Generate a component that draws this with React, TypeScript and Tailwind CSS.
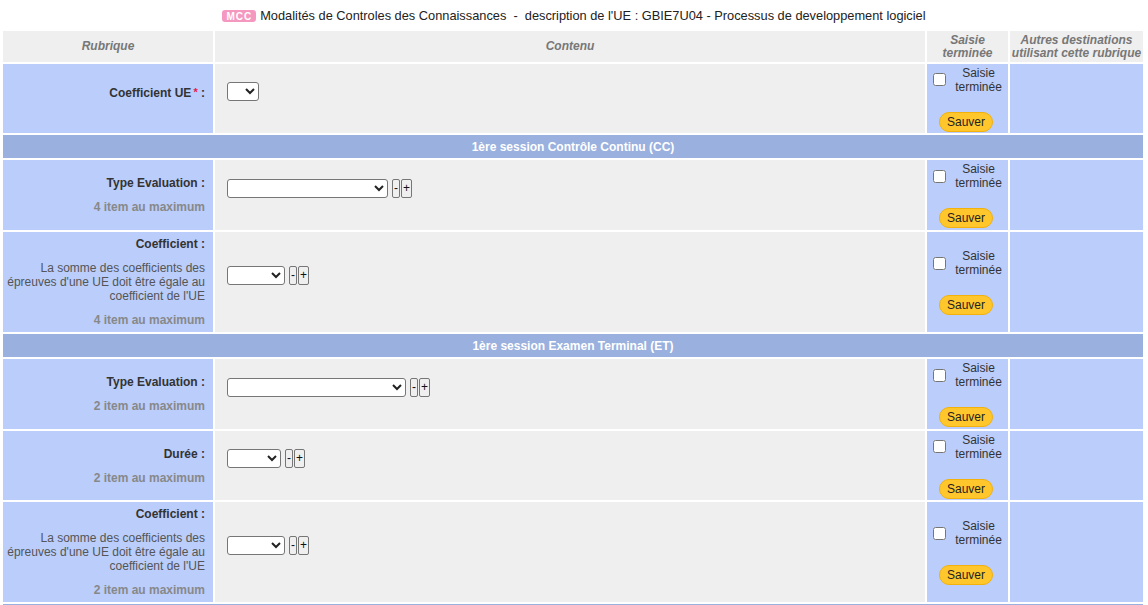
import React from 'react';

interface FieldRow {
  label: string;
  required?: boolean;
  description?: string;
  max?: string;
  selectWidth: number;
  buttons?: boolean;
  height: number;
  shiftLabel?: boolean;
}

const selectWidths: Record<number, string> = {
  32: 'w-[32px]',
  54: 'w-[54px]',
  58: 'w-[58px]',
  161: 'w-[161px]',
  179: 'w-[179px]',
};

const rowHeights: Record<number, string> = {
  69: 'h-[69px]',
  70: 'h-[70px]',
  100: 'h-[100px]',
};

function SaisieCell() {
  return (
    <td className="bg-[#bacdfb] align-middle px-[6px]">
      <div className="flex items-center">
        <input type="checkbox" className="w-[13px] h-[13px] m-0 shrink-0" />
        <span className="flex-1 text-center pl-[9px] leading-[14px] text-[#333]">
          Saisie
          <br />
          terminée
        </span>
      </div>
      <div className="mt-[18px] flex justify-center">
        <button className="h-[20px] px-[7px] rounded-full bg-[#ffc72c] border border-[#f2b10c] text-[#222] leading-[18px] mr-[3px]">
          Sauver
        </button>
      </div>
    </td>
  );
}

function Row({ row }: { row: FieldRow }) {
  return (
    <tr className={rowHeights[row.height]}>
      <td className={`bg-[#bacdfb] text-right pr-[8px] pl-[4px] align-middle ${row.shiftLabel ? 'pb-[12px]' : ''}`}>
        <div className="font-bold text-[#333] leading-[14px]">
          {row.label}
          {row.required && <sup className="text-[#e8174f] text-[11px] ml-[2px] relative -top-[1px]">*</sup>}
          {' :'}
        </div>
        {row.description && (
          <div className="mt-[10px] text-[#555] leading-[14px]">{row.description}</div>
        )}
        {row.max && <div className="mt-[10px] font-bold text-[#888] leading-[14px]">{row.max}</div>}
      </td>
      <td className="bg-[#efefef] pl-[12px] align-middle pb-[14px]">
        <div className="flex items-center">
          <select className={`${selectWidths[row.selectWidth]} h-[19px] border border-[#767676] rounded-[3px] bg-white text-[12px]`}></select>
          {row.buttons && (
            <div className="flex ml-[4px]">
              <button className="w-[8px] h-[19px] border border-[#767676] rounded-[2px] bg-[#efefef] leading-[16px] text-[12px] text-[#111] flex justify-center">-</button>
              <button className="w-[11px] h-[19px] ml-[1px] border border-[#767676] rounded-[2px] bg-[#efefef] leading-[16px] text-[12px] text-[#111] flex justify-center">+</button>
            </div>
          )}
        </div>
      </td>
      <SaisieCell />
      <td className="bg-[#bacdfb]"></td>
    </tr>
  );
}

function Section({ title }: { title: string }) {
  return (
    <tr className="h-[23px]">
      <td colSpan={4} className="bg-[#9ab0de] text-center text-white font-bold">
        {title}
      </td>
    </tr>
  );
}

const sommeText = "La somme des coefficients des épreuves d'une UE doit être égale au coefficient de l'UE";

export default function App() {
  return (
    <div className="min-h-screen bg-white px-[1px] text-[12px] text-[#222]" style={{ fontFamily: '"Liberation Sans", Arial, sans-serif' }}>
      <div className="h-[29px] flex items-center justify-center pt-[3px] text-[12.8px]">
        <span className="inline-flex items-center h-[12px] px-[4px] rounded-[3px] bg-[#f598c0] text-white text-[10px] font-bold tracking-[1px] mr-[4px]">
          MCC
        </span>
        <span>
          Modalités de Controles des Connaissances&nbsp; -&nbsp; description de l'UE : GBIE7U04 - Processus de developpement logiciel
        </span>
      </div>
      <table className="table-fixed border-separate border-spacing-[2px] w-[1144px]">
        <thead>
          <tr className="h-[31px]">
            <th className="w-[210px] bg-[#efefef] font-bold italic text-[#777] leading-[13px]">Rubrique</th>
            <th className="w-[710px] bg-[#efefef] font-bold italic text-[#777] leading-[13px]">Contenu</th>
            <th className="w-[81px] bg-[#efefef] font-bold italic text-[#777] leading-[13px]">
              Saisie
              <br />
              terminée
            </th>
            <th className="w-[133px] bg-[#efefef] font-bold italic text-[#777] leading-[13px]">
              Autres destinations utilisant cette rubrique
            </th>
          </tr>
        </thead>
        <tbody>
          <Row row={{ label: 'Coefficient UE', required: true, selectWidth: 32, height: 69, shiftLabel: true }} />
          <Section title="1ère session Contrôle Continu (CC)" />
          <Row row={{ label: 'Type Evaluation', max: '4 item au maximum', selectWidth: 161, buttons: true, height: 70 }} />
          <Row row={{ label: 'Coefficient', description: sommeText, max: '4 item au maximum', selectWidth: 58, buttons: true, height: 100 }} />
          <Section title="1ère session Examen Terminal (ET)" />
          <Row row={{ label: 'Type Evaluation', max: '2 item au maximum', selectWidth: 179, buttons: true, height: 70 }} />
          <Row row={{ label: 'Durée', max: '2 item au maximum', selectWidth: 54, buttons: true, height: 69 }} />
          <Row row={{ label: 'Coefficient', description: sommeText, max: '2 item au maximum', selectWidth: 58, buttons: true, height: 100 }} />
          <Section title="" />
        </tbody>
      </table>
    </div>
  );
}
